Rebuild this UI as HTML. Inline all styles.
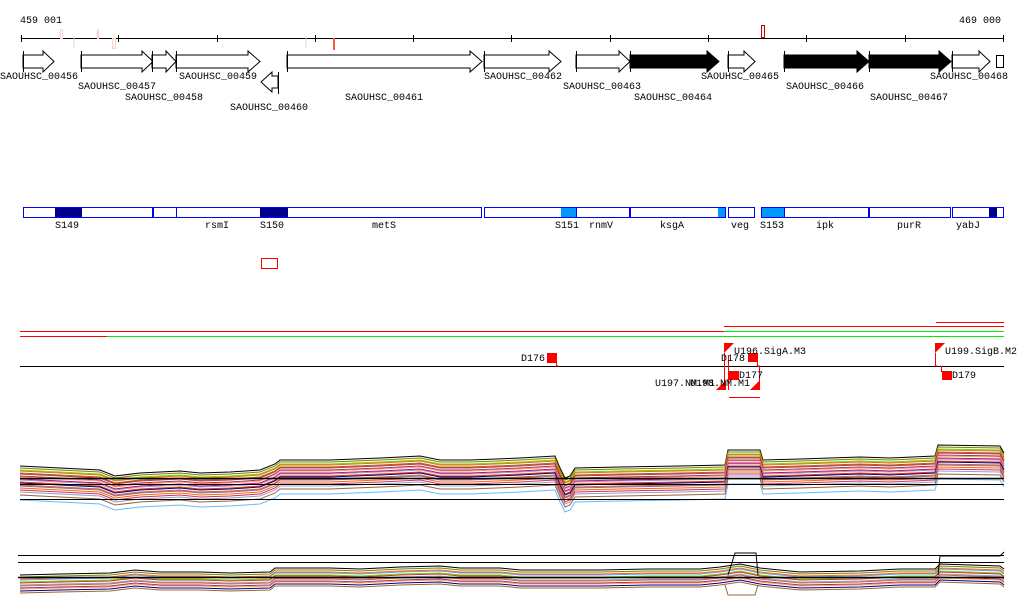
<!DOCTYPE html>
<html><head><meta charset="utf-8"><style>
html,body{margin:0;padding:0;background:#fff;width:1024px;height:611px;overflow:hidden}
svg text{font-family:"Liberation Mono","DejaVu Sans Mono",monospace;font-size:10px;fill:#000}
</style></head><body>
<svg width="1024" height="611" viewBox="0 0 1024 611" xmlns="http://www.w3.org/2000/svg">
<defs>
<path id="p1" fill="none" d="M20,468 L60,470 L100,472 L115,478 L140,475 L180,473 L200,475 L230,474 L260,472 L275,466 L280,462 L330,462 L380,460 L420,458 L440,462 L470,462 L520,460 L555,458 L560,470 L565,480 L570,478 L575,470 L620,469 L680,468 L725,467 L728,452 L760,452 L763,462 L800,461 L860,459 L890,460 L935,458 L938,447 L1000,448 L1004,455"/>
<path id="p2" fill="none" d="M20,577 L60,576 L110,575 L135,572 L160,574 L200,574 L230,575 L270,574 L275,570 L330,570 L360,571 L400,569 L440,568 L460,570 L500,570 L520,572 L560,572 L600,572 L650,571 L700,571 L720,569 L740,566 L760,570 L800,574 L860,573 L900,571 L935,571 L940,566 L1000,568 L1004,571"/>
</defs>
<!-- ruler -->
<text x="20" y="23">459 001</text>
<text x="959" y="23">469 000</text>
<line x1="21" y1="38.5" x2="1004" y2="38.5" stroke="#000"/>
<g stroke="#000">
<line x1="21.5" y1="35" x2="21.5" y2="42"/><line x1="118.5" y1="35" x2="118.5" y2="42"/><line x1="217.5" y1="35" x2="217.5" y2="42"/><line x1="315.5" y1="35" x2="315.5" y2="42"/><line x1="413.5" y1="35" x2="413.5" y2="42"/><line x1="511.5" y1="35" x2="511.5" y2="42"/><line x1="610.5" y1="35" x2="610.5" y2="42"/><line x1="708.5" y1="35" x2="708.5" y2="42"/><line x1="806.5" y1="35" x2="806.5" y2="42"/><line x1="905.5" y1="35" x2="905.5" y2="42"/><line x1="1003.5" y1="35" x2="1003.5" y2="42"/>
</g>
<g fill="none" stroke="#f9d5c5">
<rect x="60.5" y="29.5" width="2" height="9"/><rect x="97.5" y="29.5" width="1" height="9"/><rect x="112.5" y="38.5" width="3" height="10"/>
<line x1="74" y1="38" x2="74" y2="48"/><line x1="306" y1="38" x2="306" y2="48"/>
</g>
<line x1="334" y1="38" x2="334" y2="50" stroke="#f06040" stroke-width="2"/>
<rect x="761.5" y="25.5" width="3" height="12" fill="none" stroke="#c00000"/>
<!-- genes -->
<g stroke="#000" fill="#fff">
<polygon points="23,55 43,55 43,51 54,61.5 43,72 43,68 23,68"/>
<polygon points="81,55 142,55 142,51 153,61.5 142,72 142,68 81,68"/>
<polygon points="152,55 166,55 166,51 176,61.5 166,72 166,68 152,68"/>
<polygon points="176,55 248,55 248,51 260,61.5 248,72 248,68 176,68"/>
<polygon points="278,76 272,76 272,72 261,82 272,92 272,88 278,88"/>
<polygon points="287,55 470,55 470,51 482,61.5 470,72 470,68 287,68"/>
<polygon points="484,55 549,55 549,51 561,61.5 549,72 549,68 484,68"/>
<polygon points="576,55 619,55 619,51 630,61.5 619,72 619,68 576,68"/>
<polygon fill="#000" points="630,55 707,55 707,51 719,61.5 707,72 707,68 630,68"/>
<polygon points="728,55 744,55 744,51 755,61.5 744,72 744,68 728,68"/>
<polygon fill="#000" points="784,55 857,55 857,51 869,61.5 857,72 857,68 784,68"/>
<polygon fill="#000" points="869,55 939,55 939,51 951,61.5 939,72 939,68 869,68"/>
<polygon points="952,55 979,55 979,51 990,61.5 979,72 979,68 952,68"/>
<rect x="996.5" y="55.5" width="7" height="12"/>
</g>
<g stroke="#000">
<line x1="23.5" y1="51" x2="23.5" y2="72"/><line x1="81.5" y1="51" x2="81.5" y2="72"/><line x1="152.5" y1="51" x2="152.5" y2="72"/><line x1="176.5" y1="51" x2="176.5" y2="72"/><line x1="278.5" y1="72" x2="278.5" y2="94"/><line x1="287.5" y1="51" x2="287.5" y2="72"/><line x1="484.5" y1="51" x2="484.5" y2="72"/><line x1="576.5" y1="51" x2="576.5" y2="72"/><line x1="630.5" y1="51" x2="630.5" y2="72"/><line x1="728.5" y1="51" x2="728.5" y2="72"/><line x1="784.5" y1="51" x2="784.5" y2="72"/><line x1="869.5" y1="51" x2="869.5" y2="72"/><line x1="952.5" y1="51" x2="952.5" y2="72"/>
</g>
<text x="0" y="79">SAOUHSC_00456</text>
<text x="78" y="89">SAOUHSC_00457</text>
<text x="125" y="100">SAOUHSC_00458</text>
<text x="179" y="79">SAOUHSC_00459</text>
<text x="230" y="110">SAOUHSC_00460</text>
<text x="345" y="100">SAOUHSC_00461</text>
<text x="484" y="79">SAOUHSC_00462</text>
<text x="563" y="89">SAOUHSC_00463</text>
<text x="634" y="100">SAOUHSC_00464</text>
<text x="701" y="79">SAOUHSC_00465</text>
<text x="786" y="89">SAOUHSC_00466</text>
<text x="870" y="100">SAOUHSC_00467</text>
<text x="930" y="79">SAOUHSC_00468</text>
<!-- feature bar -->
<g fill="#fff" stroke="#0000ff">
<rect x="23.5" y="207.5" width="129" height="10"/>
<rect x="153.5" y="207.5" width="23" height="10"/>
<rect x="176.5" y="207.5" width="305" height="10"/>
<rect x="484.5" y="207.5" width="145" height="10"/>
<rect x="630.5" y="207.5" width="95" height="10"/>
<rect x="728.5" y="207.5" width="26" height="10"/>
<rect x="761.5" y="207.5" width="107" height="10"/>
<rect x="869.5" y="207.5" width="81" height="10"/>
<rect x="952.5" y="207.5" width="51" height="10"/>
</g>
<g fill="#00008b"><rect x="55" y="208" width="27" height="9"/><rect x="260" y="208" width="28" height="9"/><rect x="989" y="208" width="8" height="9"/></g>
<g fill="#0099ff"><rect x="561" y="208" width="16" height="9"/><rect x="718" y="208" width="7" height="9"/><rect x="762" y="208" width="22" height="9"/></g>
<line x1="576.5" y1="207" x2="576.5" y2="218" stroke="#0000ff"/>
<line x1="784.5" y1="207" x2="784.5" y2="218" stroke="#0000ff"/>
<text x="55" y="228">S149</text><text x="205" y="228">rsmI</text><text x="260" y="228">S150</text><text x="372" y="228">metS</text>
<text x="555" y="228">S151</text><text x="589" y="228">rnmV</text><text x="660" y="228">ksgA</text><text x="731" y="228">veg</text>
<text x="760" y="228">S153</text><text x="816" y="228">ipk</text><text x="897" y="228">purR</text><text x="956" y="228">yabJ</text>
<rect x="261.5" y="258.5" width="16" height="10" fill="none" stroke="#ff0000"/>
<!-- lines -->
<line x1="936" y1="322.5" x2="1004" y2="322.5" stroke="#ff0000"/>
<line x1="724" y1="326.5" x2="1004" y2="326.5" stroke="#ff0000"/>
<line x1="20" y1="331.5" x2="724" y2="331.5" stroke="#ff0000"/>
<line x1="724" y1="331.5" x2="1004" y2="331.5" stroke="#00ee00"/>
<line x1="20" y1="336.5" x2="107" y2="336.5" stroke="#ff0000"/>
<line x1="107" y1="336.5" x2="1004" y2="336.5" stroke="#00ee00"/>
<line x1="20" y1="366.5" x2="1004" y2="366.5" stroke="#000"/>
<!-- markers -->
<g fill="#ff0000">
<rect x="547" y="353" width="10" height="10"/><rect x="748" y="353" width="10" height="9"/><rect x="729" y="371" width="10" height="9"/><rect x="942" y="371" width="10" height="9"/>
<polygon points="724,343 734,343 724,353"/><polygon points="935,343 945,343 935,353"/>
<polygon points="716,390 726,380 726,390"/><polygon points="750,390 760,380 760,390"/>
</g>
<g fill="none" stroke="#ff0000">
<polyline points="556.5,363 556.5,366 558.5,366"/>
<polyline points="724.5,353 724.5,390"/><polyline points="728.5,356 728.5,390"/><polyline points="757.5,362 757.5,366 759.5,366 759.5,385"/>
<polyline points="935.5,353 935.5,366 937.5,366"/><polyline points="941.5,366 941.5,372"/>
<line x1="729" y1="397.5" x2="760" y2="397.5"/>
</g>
<text x="521" y="361">D176</text><text x="721" y="361">D178</text><text x="734" y="354">U196.SigA.M3</text>
<text x="739" y="378">D177</text><text x="655" y="386">U197.NM.M1</text><text x="690" y="386">U198.NM.M1</text>
<text x="952" y="378">D179</text><text x="945" y="354">U199.SigB.M2</text>
<!-- top traces -->
<g stroke-width="1">
<use href="#p1" stroke="#000" transform="translate(0,-2)"/>
<use href="#p1" stroke="#808000" transform="translate(0,0)"/>
<use href="#p1" stroke="#66dd00" transform="translate(0,2)"/>
<use href="#p1" stroke="#ff6600" transform="translate(0,3)"/>
<use href="#p1" stroke="#996633" transform="translate(0,5)"/>
<use href="#p1" stroke="#cc3333" transform="translate(0,6)"/>
<use href="#p1" stroke="#993366" transform="translate(0,8)"/>
<use href="#p1" stroke="#ff9966" transform="translate(0,9)"/>
<use href="#p1" stroke="#cc0066" transform="translate(0,11)"/>
<use href="#p1" stroke="#9999cc" transform="translate(0,12)"/>
<use href="#p1" stroke="#ff3300" transform="translate(0,14)"/>
<use href="#p1" stroke="#000080" transform="translate(0,15)"/>
<use href="#p1" stroke="#cc6633" transform="translate(0,17)"/>
<use href="#p1" stroke="#996699" transform="translate(0,18)"/>
<use href="#p1" stroke="#ff6600" transform="translate(0,20)"/>
<use href="#p1" stroke="#cc3366" transform="translate(0,22)"/>
<use href="#p1" stroke="#9999cc" transform="translate(0,24)"/>
<use href="#p1" stroke="#996633" transform="translate(0,27)"/>
<use href="#p1" stroke="#66bbff" transform="translate(0,32)"/>
</g>
<line x1="20" y1="478.5" x2="1004" y2="478.5" stroke="#000" stroke-width="1.5"/>
<line x1="20" y1="484.5" x2="1004" y2="484.5" stroke="#000"/>
<line x1="20" y1="499.5" x2="1004" y2="499.5" stroke="#000"/>
<!-- bottom traces -->
<line x1="18" y1="555.5" x2="1004" y2="555.5" stroke="#000"/>
<line x1="18" y1="562.5" x2="1004" y2="562.5" stroke="#000"/>
<g>
<use href="#p2" stroke="#000" transform="translate(0,-2)"/>
<use href="#p2" stroke="#808000" transform="translate(0,0)"/>
<use href="#p2" stroke="#ff6600" transform="translate(0,2)"/>
<use href="#p2" stroke="#6699ff" transform="translate(0,3)"/>
<use href="#p2" stroke="#66dd00" transform="translate(0,5)"/>
<use href="#p2" stroke="#cc3333" transform="translate(0,6)"/>
<use href="#p2" stroke="#9999cc" transform="translate(0,8)"/>
<use href="#p2" stroke="#cc6633" transform="translate(0,9)"/>
<use href="#p2" stroke="#993366" transform="translate(0,11)"/>
<use href="#p2" stroke="#ff9966" transform="translate(0,12)"/>
<use href="#p2" stroke="#000080" transform="translate(0,14)"/>
<use href="#p2" stroke="#996633" transform="translate(0,16)"/>
</g>
<line x1="18" y1="577.5" x2="1004" y2="577.5" stroke="#000" stroke-width="1.5"/>
<polyline fill="none" stroke="#000" points="728,575 735,553 756,553 758,575"/>
<polyline fill="none" stroke="#996633" points="725,585 728,595 755,595 758,585"/>
<polyline fill="none" stroke="#000" points="938,575 940,556 1000,556 1004,552"/>
</svg>
</body></html>
